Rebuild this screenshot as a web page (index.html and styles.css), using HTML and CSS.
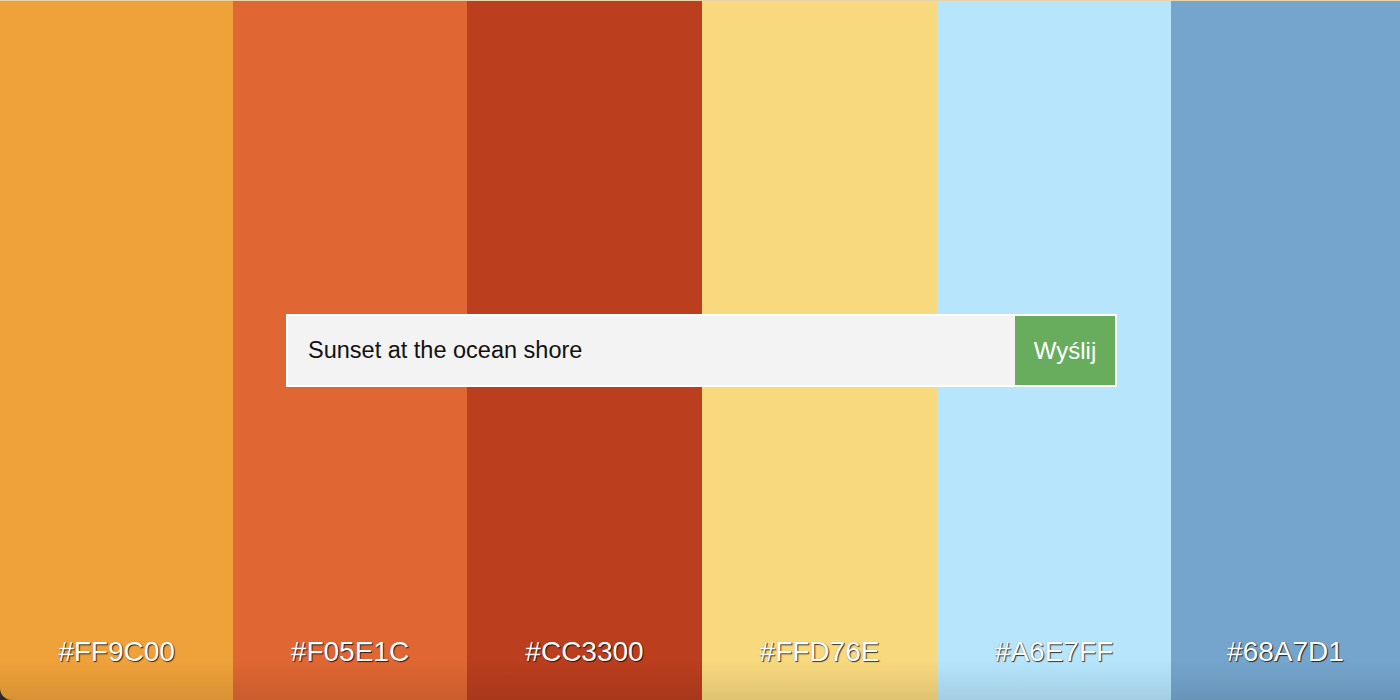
FILE: index.html
```html
<!DOCTYPE html>
<html lang="pl">
<head>
<meta charset="utf-8">
<title>Palette</title>
<link rel="stylesheet" href="styles.css">
</head>
<body>
<main class="palette">
  <div class="swatch c1"><span class="hex">#FF9C00</span></div>
  <div class="swatch c2"><span class="hex">#F05E1C</span></div>
  <div class="swatch c3"><span class="hex">#CC3300</span></div>
  <div class="swatch c4"><span class="hex">#FFD76E</span></div>
  <div class="swatch c5"><span class="hex">#A6E7FF</span></div>
  <div class="swatch c6"><span class="hex">#68A7D1</span></div>
  <form class="prompt">
    <input class="prompt-input" type="text" value="Sunset at the ocean shore">
    <button class="prompt-btn" type="button">Wyślij</button>
  </form>
</main>
</body>
</html>
```
FILE: styles.css
```css
* { box-sizing: border-box; }
html, body { margin: 0; padding: 0; height: 100%; }
body {
  font-family: "Liberation Sans", Arial, sans-serif;
  overflow: hidden;
  background: #2a2a2a;
}
.palette {
  position: relative;
  display: grid;
  grid-template-columns: 233px 234px 235px 235px 234px 229px;
  height: 700px;
  width: 1400px;
  border-top: 1px solid #e8d4a8;
  border-bottom-left-radius: 12px;
  overflow: hidden;
}
.palette::after {
  content: "";
  position: absolute;
  left: 0;
  right: 0;
  bottom: 0;
  height: 40px;
  background: linear-gradient(to bottom, rgba(0,0,0,0), rgba(0,0,0,0.1));
  pointer-events: none;
}
.swatch {
  display: flex;
  align-items: flex-end;
  justify-content: center;
  padding-bottom: 32px;
}
.c1 { background: #F0A23A; }
.c2 { background: #E06733; }
.c3 { background: #BB3E1E; }
.c4 { background: #F8D97E; }
.c5 { background: #B6E5FC; }
.c6 { background: #75A5CD; }
.hex {
  color: #fff;
  font-size: 28px;
  line-height: 32px;
  text-shadow: 1px 1px 1px rgba(0,0,0,0.75), 0 0 1px rgba(0,0,0,0.3);
}
.prompt {
  position: absolute;
  left: 286px;
  top: 313px;
  width: 831px;
  height: 73px;
  display: flex;
  border: 2px solid #fff;
  background: #fff;
  z-index: 1;
}
.prompt-input {
  flex: 1;
  border: 0;
  margin: 0;
  background: #f3f3f3;
  padding: 0 20px;
  font-family: "Liberation Sans", Arial, sans-serif;
  font-size: 23.5px;
  color: #111;
  outline: none;
}
.prompt-btn {
  width: 100px;
  border: 0;
  margin: 0;
  background: #68AD5E;
  color: #fff;
  font-family: "Liberation Sans", Arial, sans-serif;
  font-size: 24px;
}
```
